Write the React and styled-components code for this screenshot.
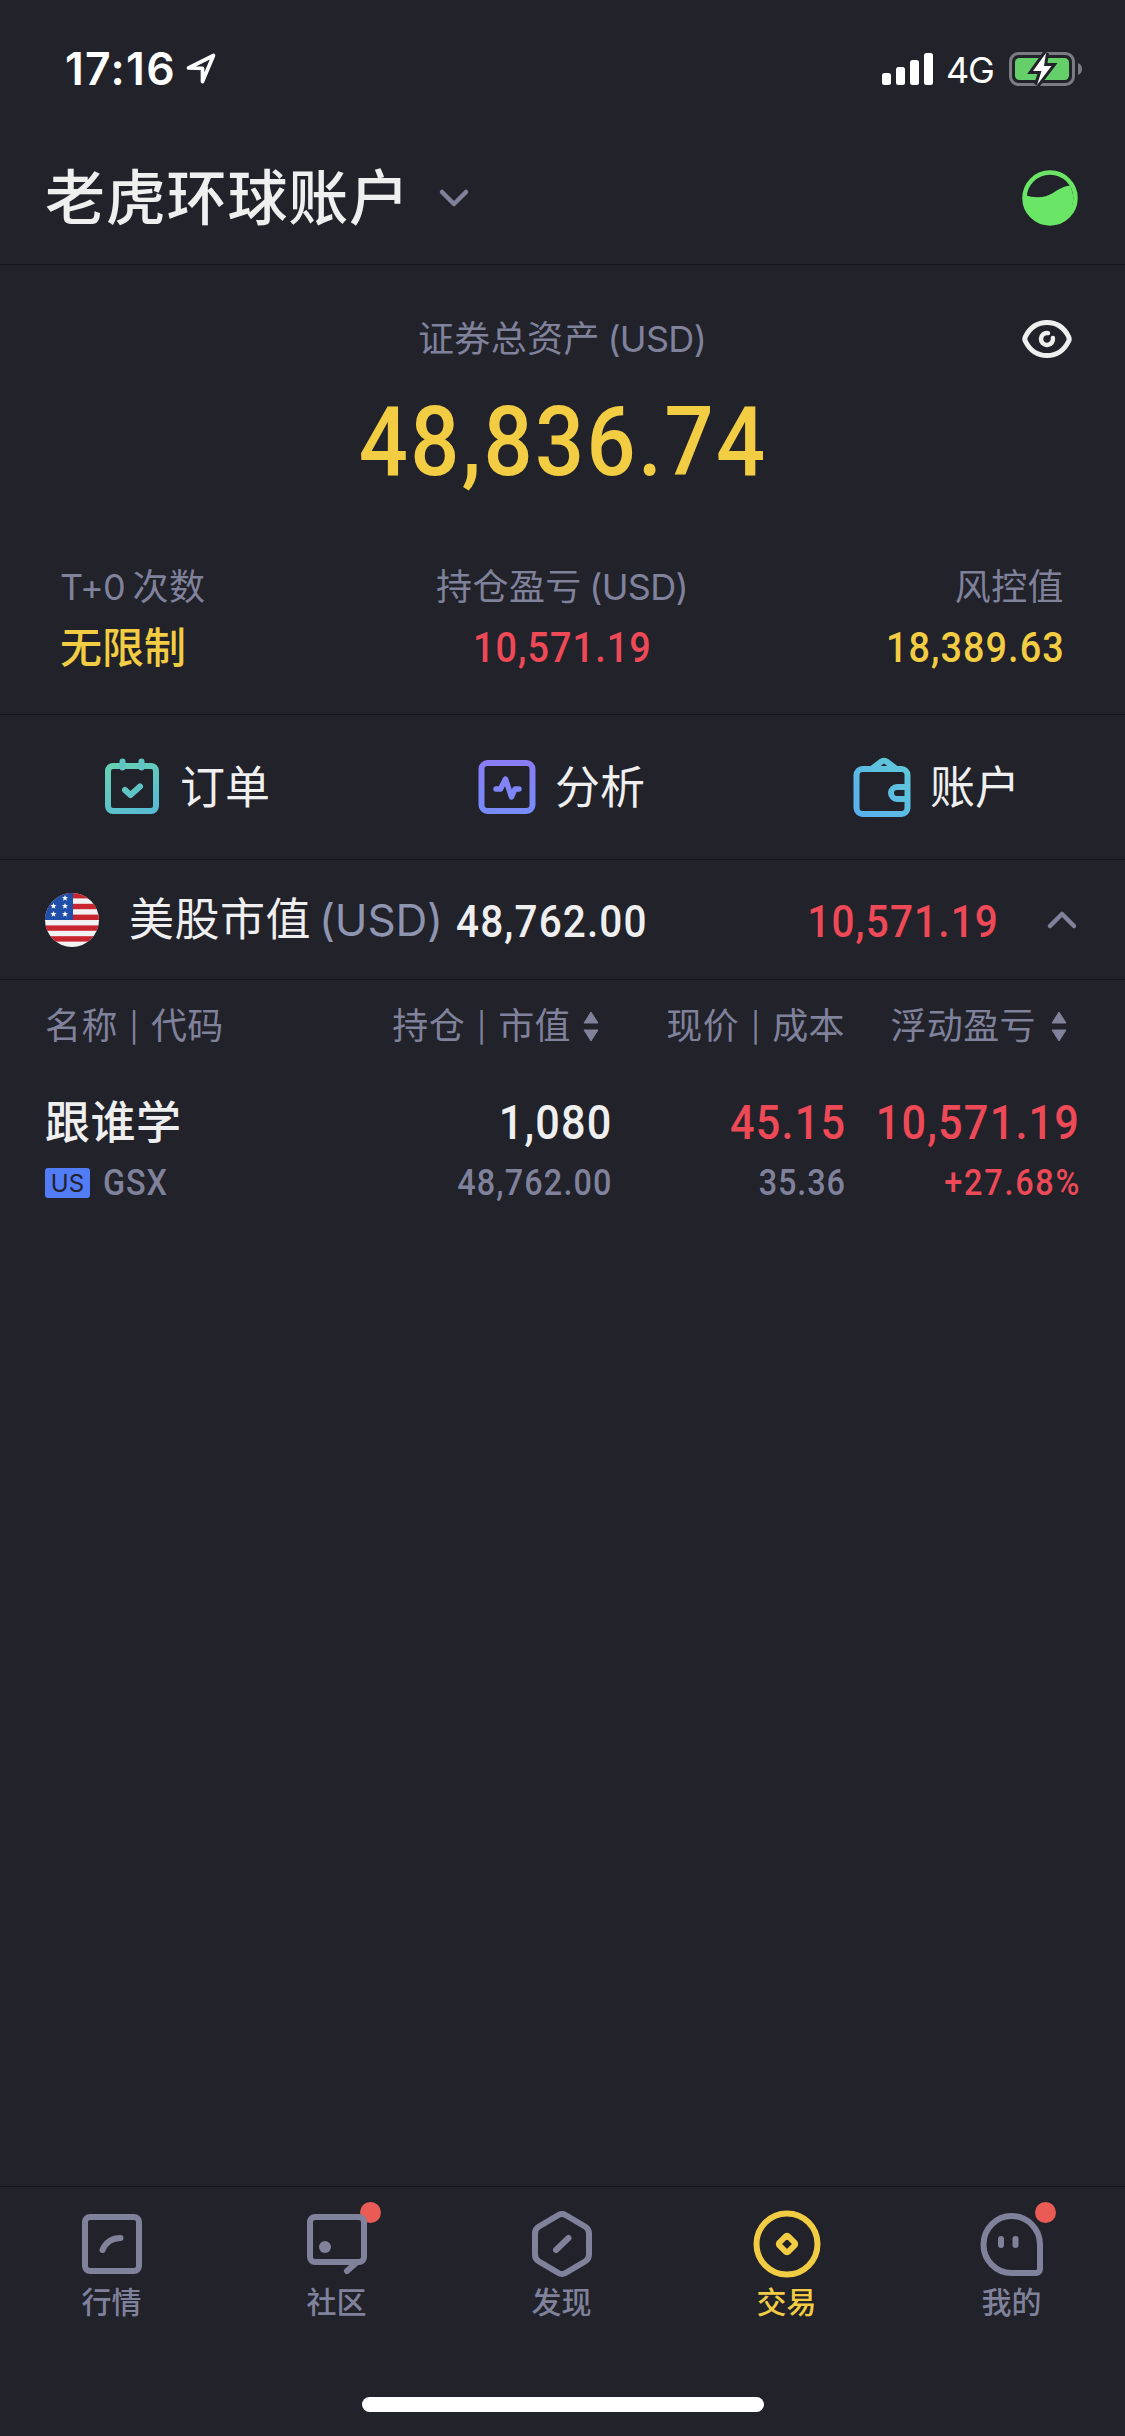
import React from 'react';
import styled, { createGlobalStyle } from 'styled-components';

const c = {
  bg: '#21222a',
  line: '#15151e',
  muted: '#80819b',
  text: '#efefef',
  yellow: '#f2cd43',
  red: '#ee4957',
};

const GlobalStyle = createGlobalStyle`
  body { margin: 0; background: ${c.bg}; }
  * { box-sizing: border-box; }
  svg { display: block; flex: none; overflow: visible; }
`;

const Screen = styled.div`
  width: 1125px;
  height: 2436px;
  display: flex;
  flex-direction: column;
  background: ${c.bg};
  color: ${c.text};
  font-family: Inter, 'Noto Sans CJK SC', sans-serif;
  overflow: hidden;
`;

const StatusBar = styled.header`
  height: 132px;
  padding: 6px 43px 0 65px;
  display: flex;
  justify-content: space-between;
  align-items: center;
  color: #fff;
`;
const StatusGroup = styled.div`
  display: flex;
  align-items: center;
`;
const Clock = styled.span`
  width: 121px;
  font-size: 44.5px;
  font-weight: 600;
  line-height: 60px;
  letter-spacing: 1.3px;
  white-space: nowrap;
`;
const Network = styled.span`
  margin: 2px 16px 0 13px;
  width: 47px;
  font-size: 36px;
  line-height: 44px;
  letter-spacing: -1.2px;
`;

const TitleBar = styled.div`
  height: 133px;
  padding: 0 47px 0 45px;
  display: flex;
  align-items: center;
  border-bottom: 1px solid ${c.line};
`;
const Title = styled.h1`
  margin: 0 29px 0 0;
  font-size: 60px;
  font-weight: 500;
  line-height: 80px;
  letter-spacing: 0.8px;
`;
const Spacer = styled.div`
  flex: 1;
`;

const Summary = styled.section`
  height: 450px;
  padding: 46px 53px 0 60px;
  border-bottom: 1px solid ${c.line};
`;
const TotalHead = styled.div`
  display: grid;
  grid-template-columns: 42px 1fr 50px;
  align-items: center;
  height: 56px;
`;
const Caption = styled.span`
  font-size: ${(p) => p.$size || 36}px;
  line-height: 56px;
  letter-spacing: ${(p) => p.$track ?? 0.4}px;
  word-spacing: -3px;
  color: ${(p) => p.$color || c.muted};
  white-space: nowrap;
`;
const CenterCaption = styled(Caption)`
  grid-column: 2;
  text-align: center;
`;
const Latin = styled.span`
  letter-spacing: -0.7px;
`;
const Pipe = styled.span`
  margin: 0 4px;
  font-size: 29px;
  line-height: 1;
  vertical-align: 1px;
`;
const Num = styled.span`
  font-family: Roboto, 'Noto Sans CJK SC', sans-serif;
  font-size: ${(p) => p.$size}px;
  line-height: ${(p) => p.$line || 56}px;
  font-weight: 500;
  letter-spacing: ${(p) => p.$track || 0.028}em;
  margin-right: ${(p) => -(p.$track || 0.028)}em;
  color: ${(p) => p.$color || c.text};
  white-space: nowrap;
  transform: scaleX(0.9);
  transform-origin: ${(p) => p.$origin || 'right'} center;
`;
const Total = styled.div`
  display: flex;
  justify-content: center;
  height: 131px;
  padding: 16px 8px 0 0;
`;
const Stats = styled.div`
  display: grid;
  grid-template-columns: 1fr 1fr 1fr;
  margin-top: 61px;
  padding-right: 8px;
`;
const Stat = styled.div`
  display: flex;
  flex-direction: column;
  align-items: ${(p) => p.$align};
  row-gap: 5px;
`;
const Limit = styled.span`
  font-size: 42px;
  font-weight: 500;
  line-height: 56px;
  color: ${c.yellow};
`;

const Actions = styled.nav`
  height: 145px;
  display: grid;
  grid-template-columns: repeat(3, 375px);
  border-bottom: 1px solid ${c.line};
`;
const Action = styled.button`
  appearance: none;
  border: 0;
  padding: 0 0 1px 102px;
  background: none;
  color: ${c.text};
  font: inherit;
  font-size: 45px;
  line-height: 60px;
  display: flex;
  align-items: center;
  gap: 18px;
`;
const ActionLabel = styled.span`
  padding-top: 2px;
`;

const MarketRow = styled.div`
  height: 120px;
  padding: 0 48px 0 45px;
  display: flex;
  align-items: center;
  border-bottom: 1px solid ${c.line};
`;
const MarketName = styled.span`
  margin: 1px 8px 0 30px;
  font-size: 45px;
  line-height: 60px;
  letter-spacing: 0.5px;
`;
const MarketValues = styled.div`
  flex: 1;
  display: flex;
  justify-content: space-between;
  margin: 5px 49px 0 13px;
`;

const Table = styled.section`
  flex: 1;
  padding: 0 46px 0 45px;
`;
const Row = styled.div`
  display: grid;
  grid-template-columns: 1fr 320px 234px 234px;
  align-items: center;
  height: ${(p) => p.$height}px;
  margin-top: ${(p) => p.$top || 0}px;
`;
const Cell = styled.div`
  display: flex;
  align-items: center;
  justify-content: ${(p) => (p.$left ? 'flex-start' : 'flex-end')};
  gap: ${(p) => p.$gap || 0}px;
  padding-right: ${(p) => p.$inset || 0}px;
`;
const StockName = styled.span`
  font-size: 45px;
  font-weight: 500;
  line-height: 60px;
  letter-spacing: 0.5px;
`;
const Tag = styled.span`
  width: 45px;
  height: 30px;
  border-radius: 3px;
  background: #517cf6;
  color: ${c.bg};
  font-size: 24px;
  line-height: 31px;
  text-align: center;
`;

const TabBar = styled.nav`
  height: 250px;
  border-top: 1px solid ${c.line};
  display: flex;
  flex-direction: column;
  align-items: center;
`;
const Tabs = styled.div`
  width: 100%;
  height: 210px;
  display: grid;
  grid-template-columns: repeat(5, 1fr);
`;
const Tab = styled.div`
  display: flex;
  flex-direction: column;
  align-items: center;
  padding: 18px 2px 0 0;
  color: ${(p) => (p.$active ? c.yellow : c.muted)};
`;
const TabLabel = styled.span`
  margin-top: 1px;
  font-size: 30px;
  font-weight: 500;
  line-height: 40px;
`;
const HomeIndicator = styled.div`
  width: 402px;
  height: 15px;
  border-radius: 8px;
  background: #fff;
`;

const LocationIcon = () => (
  <svg width="30" height="32" viewBox="0 0 30 32" fill="none" stroke="currentColor" strokeWidth="3.700" strokeLinejoin="round">
    <path d="M2.500 15 27.500 2.500 16.500 28.500V15.300Z" />
  </svg>
);
const SignalIcon = () => (
  <svg width="51" height="32" viewBox="0 0 51 32" fill="currentColor">
    <rect x="0" y="20" width="9" height="12" rx="2.5" />
    <rect x="14" y="14" width="9" height="18" rx="2.5" />
    <rect x="28" y="7" width="9" height="25" rx="2.5" />
    <rect x="42" y="0" width="9" height="32" rx="2.5" />
  </svg>
);
const BatteryIcon = () => (
  <svg width="73" height="34" viewBox="0 0 73 34">
    <rect x="1.5" y="1.5" width="63" height="31" rx="8" fill="none" stroke="#7b7c82" strokeWidth="3" />
    <path d="M69 11a6.500 6.500 0 0 1 0 12Z" fill="#7b7c82" />
    <rect x="6" y="6" width="54" height="22" rx="4.5" fill="#65cf69" />
    <path d="M37 1 24 19h8.500L28 33 42.500 14H35Z" fill="#fff" stroke={c.bg} strokeWidth="6" paintOrder="stroke" />
  </svg>
);
const Chevron = ({ up }) => (
  <svg width="30" height="20" viewBox="0 0 30 20" fill="none" stroke={c.muted} strokeWidth="4.500" strokeLinecap="round" strokeLinejoin="round">
    <path d={up ? 'M3 16 15 4 27 16' : 'M3 4 15 16 27 4'} />
  </svg>
);
const LevelIcon = () => (
  <svg width="56" height="56" viewBox="0 0 56 56">
    <circle cx="28" cy="28" r="25.500" fill="none" stroke="#6ae566" strokeWidth="4.500" />
    <path d="M3 25c10 3.500 20 3 28-2 6-4 10-6.500 17-7.500 8 16 1 37-20 38.500C10 54 1 40 3 25Z" fill="#6ae566" />
  </svg>
);
const EyeIcon = () => (
  <svg width="50" height="38" viewBox="0 0 50 38" fill="none" stroke={c.text} strokeWidth="5" strokeLinecap="round">
    <path d="M3.500 16.500C8 7.500 15.500 2.500 25 2.500S42 7.500 46.500 16.500a5 5 0 0 1 0 5C42 30.500 34.500 35.500 25 35.500S8 30.500 3.500 21.500a5 5 0 0 1 0-5Z" />
    <path d="M26 13.100a6 6 0 1 0 4.900 4.900" strokeWidth="4.500" />
  </svg>
);
const Gradient = ({ id, from, to, x2 = 0, y2 = 1 }) => (
  <defs>
    <linearGradient id={id} gradientUnits="userSpaceOnUse" x1="0" y1={y2 ? 0 : 60} x2={x2 * 60} y2={y2 * 60}>
      <stop stopColor={from} />
      <stop offset="1" stopColor={to} />
    </linearGradient>
  </defs>
);
const OrderIcon = () => (
  <svg width="60" height="60" viewBox="0 0 60 60" fill="none" stroke="url(#order)" strokeWidth="6" strokeLinecap="round" strokeLinejoin="round">
    <Gradient id="order" from="#6ad5ab" to="#58bcd3" x2={0.5} />
    <rect x="6" y="9" width="48" height="45" rx="5" />
    <path d="M20.500 4.500v6M39.500 4.500v6" stroke="#5ec4c4" />
    <path d="m23 33 5.500 5 9.500-8.500" />
  </svg>
);
const AnalysisIcon = () => (
  <svg width="60" height="60" viewBox="0 0 60 60" fill="none" stroke="url(#analysis)" strokeWidth="6" strokeLinecap="round" strokeLinejoin="round">
    <Gradient id="analysis" from="#8b7bf5" to="#758df8" />
    <rect x="4.500" y="6" width="51" height="48" rx="6" />
    <path d="M19 32h4.500L28.500 22 34.500 40l3.500-8h4" strokeWidth="5.500" />
  </svg>
);
const WalletIcon = () => (
  <svg width="60" height="60" viewBox="0 0 60 60" fill="none" stroke="url(#wallet)" strokeWidth="6" strokeLinecap="round" strokeLinejoin="round">
    <Gradient id="wallet" from="#59aef0" to="#60cbd4" x2={1} y2={0} />
    <rect x="4.500" y="12" width="51" height="45" rx="6" />
    <path d="m21 11 8.500-6.500a5 5 0 0 1 5 0L43 11M54 30h-9a6 6 0 0 0 0 12h9" />
  </svg>
);
const STARS = [[20, 5], [8.500, 13], [20, 13], [8.500, 21], [20, 21]];
const FlagIcon = () => (
  <svg width="54" height="54" viewBox="0 0 54 54">
    <clipPath id="round"><circle cx="27" cy="27" r="27" /></clipPath>
    <g clipPath="url(#round)">
      <rect width="54" height="54" fill="#f2f2f4" />
      {[0, 10.800, 21.600, 32.400, 43.200].map((y) => (
        <rect key={y} y={y} width="54" height="5.400" fill="#c9252f" />
      ))}
      <rect width="28" height="27" fill="#1f4fa8" />
      {STARS.map(([x, y]) => (
        <path key={`${x}-${y}`} transform={`translate(${x} ${y})`} d="m0-3 .8 2.100 2.200.1-1.700 1.400.6 2.200L0 1.500l-1.900 1.300.6-2.200L-3-.8l2.200-.1Z" fill="#fff" />
      ))}
    </g>
  </svg>
);
const SortIcon = () => (
  <svg width="16" height="29" viewBox="0 0 16 29" fill={c.muted} stroke={c.muted} strokeLinejoin="round">
    <path d="M8 0 15 11H1ZM8 29 15 18H1Z" />
  </svg>
);

const TabIcon = ({ children, dot }) => (
  <svg width="76" height="76" viewBox="0 0 76 76" fill="none" stroke="currentColor" strokeWidth="6" strokeLinecap="round" strokeLinejoin="round">
    {dot && <circle cx={dot} cy="7.500" r="10.500" fill="#eb5b56" stroke="none" />}
    {children}
  </svg>
);
const tabs = [
  { label: '行情', icon: <><rect x="11" y="12" width="54" height="54" rx="5" /><path d="M28.500 45c3-7 8-12 18-12" /></> },
  { label: '社区', dot: 71.5, icon: <><rect x="11" y="12" width="54" height="45" rx="5" fill={c.bg} /><circle cx="26" cy="42" r="6" fill="currentColor" stroke="none" /><path d="m48 66 9-8" /></> },
  { label: '发现', icon: <><path d="M34.500 10a7 7 0 0 1 7 0L61 21.500a8 8 0 0 1 4 7v21a8 8 0 0 1-4 7L41.500 68a7 7 0 0 1-7 0L15 56.500a8 8 0 0 1-4-7v-21a8 8 0 0 1 4-7Z" /><path d="M32 45 44.500 33" /></> },
  { label: '交易', active: true, icon: <><circle cx="38" cy="39" r="30.500" /><path d="m36.500 31.500-6 6a2 2 0 0 0 0 3l6 6a2 2 0 0 0 3 0l6-6a2 2 0 0 0 0-3l-6-6a2 2 0 0 0-3 0Z" /></> },
  { label: '我的', dot: 71.5, icon: <><path d="M37.500 11a28 28.500 0 0 0 0 57H62a4 4 0 0 0 4-4V39.500A28.500 28.500 0 0 0 37.500 11Z" /><path d="M27 34v6M41.500 34v6" /></> },
];

export default function App() {
  return (
    <Screen>
      <GlobalStyle />
      <StatusBar>
        <StatusGroup>
          <Clock>17:16</Clock>
          <LocationIcon />
        </StatusGroup>
        <StatusGroup>
          <SignalIcon />
          <Network>4G</Network>
          <BatteryIcon />
        </StatusGroup>
      </StatusBar>
      <TitleBar>
        <Title>老虎环球账户</Title>
        <Chevron />
        <Spacer />
        <LevelIcon />
      </TitleBar>
      <Summary>
        <TotalHead>
          <CenterCaption>证券总资产 <Latin>(USD)</Latin></CenterCaption>
          <EyeIcon />
        </TotalHead>
        <Total>
          <Num $size={96} $line={118} $color={c.yellow} $origin="center">48,836.74</Num>
        </Total>
        <Stats>
          <Stat $align="flex-start">
            <Caption><Latin>T+0</Latin> 次数</Caption>
            <Limit>无限制</Limit>
          </Stat>
          <Stat $align="center">
            <Caption>持仓盈亏 <Latin>(USD)</Latin></Caption>
            <Num $size={42} $color={c.red} $origin="center">10,571.19</Num>
          </Stat>
          <Stat $align="flex-end">
            <Caption>风控值</Caption>
            <Num $size={42} $color={c.yellow}>18,389.63</Num>
          </Stat>
        </Stats>
      </Summary>
      <Actions>
        <Action><OrderIcon /><ActionLabel>订单</ActionLabel></Action>
        <Action><AnalysisIcon /><ActionLabel>分析</ActionLabel></Action>
        <Action><WalletIcon /><ActionLabel>账户</ActionLabel></Action>
      </Actions>
      <MarketRow>
        <FlagIcon />
        <MarketName>美股市值</MarketName>
        <Caption $size={44} $track={-0.2} $color="#8f95b0">(USD)</Caption>
        <MarketValues>
          <Num $size={45} $origin="left">48,762.00</Num>
          <Num $size={45} $color={c.red}>10,571.19</Num>
        </MarketValues>
        <Chevron up />
      </MarketRow>
      <Table>
        <Row $height={92}>
          <Cell $left><Caption>名称 <Pipe>|</Pipe> 代码</Caption></Cell>
          <Cell $gap={12} $inset={12}><Caption>持仓 <Pipe>|</Pipe> 市值</Caption><SortIcon /></Cell>
          <Cell><Caption>现价 <Pipe>|</Pipe> 成本</Caption></Cell>
          <Cell $gap={15} $inset={12}><Caption>浮动盈亏</Caption><SortIcon /></Cell>
        </Row>
        <Row $height={62} $top={20}>
          <Cell $left><StockName>跟谁学</StockName></Cell>
          <Cell><Num $size={48}>1,080</Num></Cell>
          <Cell><Num $size={48} $color={c.red}>45.15</Num></Cell>
          <Cell><Num $size={48} $color={c.red}>10,571.19</Num></Cell>
        </Row>
        <Row $height={57}>
          <Cell $left $gap={13}><Tag>US</Tag><Num $size={36} $color={c.muted} $origin="left">GSX</Num></Cell>
          <Cell><Num $size={36} $track={0.035} $color={c.muted}>48,762.00</Num></Cell>
          <Cell><Num $size={36} $color={c.muted}>35.36</Num></Cell>
          <Cell><Num $size={36} $track={0.055} $color={c.red}>+27.68%</Num></Cell>
        </Row>
      </Table>
      <TabBar>
        <Tabs>
          {tabs.map((t) => (
            <Tab key={t.label} $active={t.active}>
              <TabIcon dot={t.dot}>{t.icon}</TabIcon>
              <TabLabel>{t.label}</TabLabel>
            </Tab>
          ))}
        </Tabs>
        <HomeIndicator />
      </TabBar>
    </Screen>
  );
}
